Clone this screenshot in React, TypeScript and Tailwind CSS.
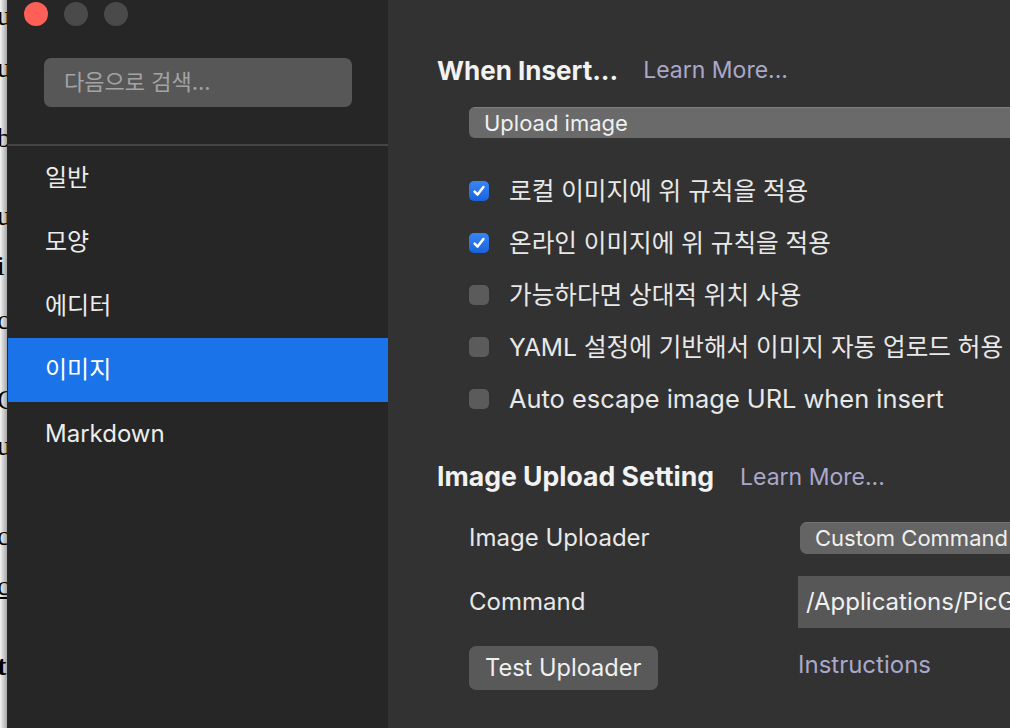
import React from "react";

const font = { fontFamily: "Inter, 'Noto Sans CJK KR', sans-serif" };

const sideItems = ["일반", "모양", "에디터", "이미지", "Markdown"];

const checks = [
  { label: "로컬 이미지에 위 규칙을 적용", on: true, size: "text-[24.6px]" },
  { label: "온라인 이미지에 위 규칙을 적용", on: true, size: "text-[24.6px]" },
  { label: "가능하다면 상대적 위치 사용", on: false, size: "text-[24.6px]" },
  { label: "YAML 설정에 기반해서 이미지 자동 업로드 허용", on: false, size: "text-[24.6px]" },
  { label: "Auto escape image URL when insert", on: false, size: "text-[25.4px]" },
];

const backdrop = [
  { h: "h-[30px]", t: "u" },
  { h: "h-[52px]", t: "u" },
  { h: "h-[70px]", t: "b" },
  { h: "h-[78px]", t: "u" },
  { h: "h-[50px]", t: "i" },
  { h: "h-[54px]", t: "c" },
  { h: "h-[80px]", t: "G" },
  { h: "h-[46px]", t: "u" },
  { h: "h-[90px]", t: "c" },
  { h: "h-[50px]", t: "c" },
  { h: "h-[80px]", t: "t" },
];

const Check = ({ on }: { on: boolean }) =>
  on ? (
    <div className="w-[20px] h-[20px] rounded-[5px] bg-gradient-to-b from-[#3a85f5] to-[#1763dc] flex items-center justify-center">
      <svg width="14" height="14" viewBox="0 0 14 14">
        <path d="M2.6 7.6 L5.6 10.6 L11.4 3" stroke="white" strokeWidth="2.5" fill="none" strokeLinecap="round" strokeLinejoin="round" />
      </svg>
    </div>
  ) : (
    <div className="w-[20px] h-[20px] rounded-[5px] bg-[#5b5b5b]" />
  );

export default function App() {
  return (
    <div className="flex w-[1010px] h-[728px] overflow-hidden" style={font}>
      {/* document behind the window */}
      <div className="w-[7px] shrink-0 bg-gradient-to-r from-[#f4f4f4] to-[#a8a8a8] overflow-hidden flex flex-col">
        {backdrop.map((b, i) => (
          <div
            key={i}
            className={`${b.h} shrink-0 flex items-end -ml-[3px] text-[28px] leading-none text-black ${i === 10 ? "font-bold" : ""} ${i === 9 ? "underline text-[#3a2f6a]" : ""}`}
            style={{ fontFamily: "'Liberation Serif', serif" }}
          >
            {b.t}
          </div>
        ))}
      </div>
      <div className="w-[1px] shrink-0 bg-[#2a2a2a]" />

      {/* sidebar */}
      <div className="w-[380px] shrink-0 bg-[#262626] flex flex-col">
        <div className="flex gap-[16px] pl-[16px] pt-[2px]">
          <div className="w-[24px] h-[24px] rounded-full bg-[#fe5f57]" />
          <div className="w-[24px] h-[24px] rounded-full bg-[#4a4a4a]" />
          <div className="w-[24px] h-[24px] rounded-full bg-[#4a4a4a]" />
        </div>
        <div className="mt-[32px] ml-[36px] w-[308px] h-[49px] rounded-[7px] bg-[#575757] flex items-center pl-[20px] text-[22px] text-[#a3a3a3]">
          다음으로 검색...
        </div>
        <div className="mt-[37px] h-[2px] bg-[#444444]" />
        {sideItems.map((s) => (
          <div
            key={s}
            className={`h-[64px] flex items-center pl-[37px] text-[24px] text-[#ececec] ${s === "이미지" ? "bg-[#1a73e8] text-white" : ""}`}
          >
            {s}
          </div>
        ))}
      </div>

      {/* main panel */}
      <div className="flex-1 bg-[#323232] pl-[49px] pt-[50px] text-[#e8e8e8]">
        <div className="h-[40px] flex items-center gap-[25px]">
          <span className="text-[26px] font-bold text-[#f2f2f2]">When Insert...</span>
          <span className="text-[23px] text-[#aaa8cb]">Learn More...</span>
        </div>
        <div className="mt-[17px] ml-[32px] h-[31px] rounded-l-[6px] bg-[#6a6a6a] border-t border-[#7e7e7e] flex items-center pl-[15px] text-[22px] text-[#f0f0f0]">
          Upload image
        </div>

        <div className="mt-[27px] ml-[32px] flex flex-col">
          {checks.map((c) => (
            <div key={c.label} className="h-[52px] flex items-center gap-[20px] whitespace-nowrap">
              <Check on={c.on} />
              <span className={c.size}>{c.label}</span>
            </div>
          ))}
        </div>

        <div className="mt-[32px] h-[40px] flex items-center gap-[26px]">
          <span className="text-[26.6px] font-bold text-[#f2f2f2]">Image Upload Setting</span>
          <span className="text-[23px] text-[#aaa8cb]">Learn More...</span>
        </div>

        <div className="mt-[25px] ml-[32px] h-[32px] flex items-center">
          <span className="w-[331px] text-[24px]">Image Uploader</span>
          <div className="flex-1 h-[32px] rounded-l-[7px] bg-[#646464] border-t border-[#747474] flex items-center pl-[15px] text-[22px] text-[#f0f0f0] whitespace-nowrap overflow-hidden">
            Custom Command
          </div>
        </div>

        <div className="mt-[22px] ml-[32px] h-[52px] flex items-center">
          <span className="w-[329px] text-[24px]">Command</span>
          <div className="flex-1 h-[52px] bg-[#575757] flex items-center pl-[8px] text-[24px] text-[#f0f0f0] whitespace-nowrap overflow-hidden">
            /Applications/PicGo.app/Contents/MacOS/PicGo
          </div>
        </div>

        <div className="mt-[18px] ml-[32px] h-[44px] flex items-center">
          <div className="w-[189px] h-[44px] rounded-[7px] bg-[#595959] flex items-center pl-[16px] text-[23.6px] text-[#f0f0f0]">
            Test Uploader
          </div>
          <span className="ml-[140px] -mt-[6px] text-[24px] text-[#aaa8cb]">Instructions</span>
        </div>
      </div>
    </div>
  );
}
